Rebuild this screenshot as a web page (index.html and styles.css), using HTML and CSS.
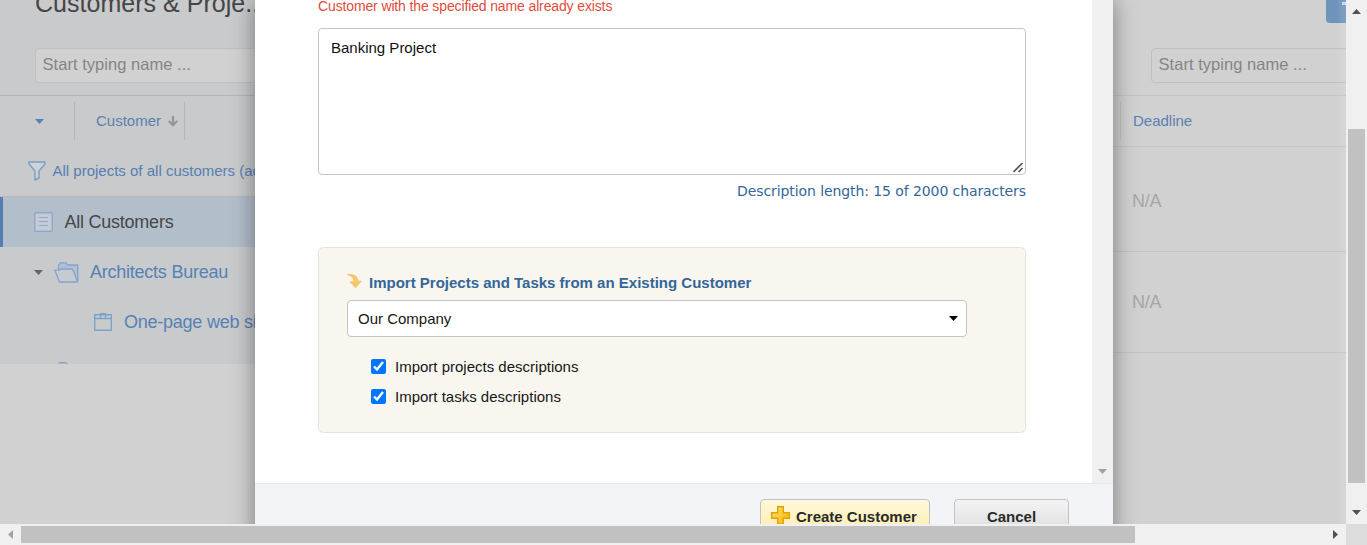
FILE: index.html
```html
<!DOCTYPE html>
<html lang="en">
<head>
<meta charset="utf-8">
<title>Customers &amp; Projects</title>
<link rel="stylesheet" href="styles.css">
</head>
<body>
<div class="window">
  <main class="viewport">
    <aside class="sidebar">
      <div class="sidebar-head">
        <h1 class="title">Customers &amp; Proje...</h1>
        <div class="search">Start typing name ...</div>
      </div>
      <div class="columns">
        <div class="col-menu"><svg width="9" height="5"><path d="M0 0h9L4.5 5z" fill="#5482b5"/></svg></div>
        <div class="col-customer"><span>Customer</span><svg width="10" height="11"><path d="M5 0V9M.8 5L5 9.200L9.200 5" fill="none" stroke="#92979f" stroke-width="2.300"/></svg></div>
      </div>
      <div class="filter-row">
        <svg width="18" height="20" viewBox="0 0 18 20"><path d="M1 1H17V3L11 10V17L7 19V10L1 3Z" fill="#d0d2d4" stroke="#789fc4" stroke-width="1.400" stroke-linejoin="round"/></svg>
        <span>All projects of all customers (active)</span>
      </div>
      <div class="tree-row selected">
        <svg width="19" height="20"><rect x=".75" y=".75" width="17.500" height="18.500" rx="1" fill="#c6cbd1" stroke="#8ba8d0" stroke-width="1.400"/><path d="M5 5.500h9M5 9.500h9M5 13.500h9" stroke="#8ba8d0" stroke-width="1.200"/></svg>
        <span>All Customers</span>
      </div>
      <div class="tree-row customer">
        <svg width="9" height="5"><path d="M0 0h9L4.500 5z" fill="#666"/></svg>
        <svg class="folder" width="25" height="21" viewBox="0 0 25 21"><path d="M4.500 8V3L6.500 .8h5.500L13.500 3H23.800V19.800" fill="#b0bfd3" stroke="#86a3ce" stroke-width="1.300"/><path d="M.8 8.200h4.500L7 7h11l1.700 2.500L23.500 20H5.500z" fill="#c6cbd1" stroke="#86a3ce" stroke-width="1.300" stroke-linejoin="round"/></svg>
        <span>Architects Bureau</span>
      </div>
      <div class="tree-row project">
        <svg width="18" height="18"><path d="M.7 1.700H17.300V17.300H.7ZM.7 5.500H17.300M6.500 5V.7H11.500V5" fill="none" stroke="#7aa4c9" stroke-width="1.400"/></svg>
        <span>One-page web site</span>
      </div>
      <div class="tree-row next"><svg width="10" height="3"><path d="M0 3Q1 .7 3 .7H7Q9 .7 10 3" fill="#b0bfd3" stroke="#86a3ce" stroke-width="1.200"/></svg></div>
    </aside>

    <section class="table">
      <div class="table-head">
        <button class="add"></button>
        <div class="search">Start typing name ...</div>
      </div>
      <div class="columns"><div class="col-deadline">Deadline</div></div>
      <div class="cell first">N/A</div>
      <div class="cell">N/A</div>
      <div class="edge"></div>
    </section>

    <section class="dialog">
      <div class="dialog-main">
        <div class="form">
          <div class="error">Customer with the specified name already exists</div>
          <div class="description">Banking Project<svg class="grip" width="11" height="11"><path d="M.5 10L9.500 1M5.500 10L9.500 6" stroke="#555" stroke-width="1.700"/></svg></div>
          <div class="counter">Description length: 15 of 2000 characters</div>
          <div class="import">
            <div class="import-title">
              <svg width="15" height="15" viewBox="0 0 15 15"><path d="M0 .5C6-.3 11 1.500 11 7H14.500L8.500 13.800L2.800 7.800H6.500C7 4 4.500 2 0 .5Z" fill="#f8c76b" stroke="#f3bd70" stroke-width=".6"/></svg>
              <span>Import Projects and Tasks from an Existing Customer</span>
            </div>
            <div class="select"><span>Our Company</span><svg width="9" height="5"><path d="M0 0h9L4.500 5z"/></svg></div>
            <label class="option"><input type="checkbox" checked><span>Import projects descriptions</span></label>
            <label class="option"><input type="checkbox" checked><span>Import tasks descriptions</span></label>
          </div>
        </div>
        <div class="dialog-scroll"><svg width="9" height="5"><path d="M0 0h9L4.500 5z" fill="#a3a3a3"/></svg></div>
      </div>
      <footer class="actions">
        <div class="btn primary"><svg width="19" height="19"><defs><linearGradient id="gold" x1="0" y1="0" x2="1" y2="1"><stop offset="0" stop-color="#ffe36b"/><stop offset="1" stop-color="#f5b400"/></linearGradient></defs><path d="M6.700.7h5.600v6h6v5.600h-6v6H6.700v-6h-6V6.700h6z" fill="url(#gold)" stroke="#dfa010" stroke-width="1.400"/></svg><span>Create Customer</span></div>
        <div class="btn cancel">Cancel</div>
      </footer>
    </section>
  </main>

  <div class="vscroll">
    <svg width="9" height="5"><path d="M0 5h9L4.500 0z" fill="#505050"/></svg>
    <div class="vthumb"></div>
    <svg width="9" height="5"><path d="M0 0h9L4.500 5z" fill="#505050"/></svg>
  </div>
  <div class="hscroll">
    <svg width="5" height="9"><path d="M5 0v9L0 4.500z" fill="#a3a3a3"/></svg>
    <div class="hthumb"></div>
    <svg width="5" height="9"><path d="M0 0v9L5 4.500z" fill="#505050"/></svg>
  </div>
  <div class="corner"></div>
</div>
</body>
</html>
```
FILE: styles.css
```css
* { box-sizing: border-box; }
body { margin: 0; overflow: hidden; font-family: "Liberation Sans", Arial, sans-serif; }
svg { display: block; flex: none; }

.window { display: grid; grid-template: 524px 21px / 1346px 21px; width: 1367px; height: 545px; }
.viewport { position: relative; display: flex; justify-content: space-between; overflow: hidden; background: #d1d1d1; }

/* Tree on the left */
.sidebar { width: 320px; height: 364px; overflow: hidden; background: #c9cacc; white-space: nowrap; }
.sidebar-head { display: flow-root; height: 96px; border-bottom: 1px solid #b4b6b8; padding-left: 35px; }
.title { margin: -11px 0 0; height: 59px; font-weight: 400; font-size: 25px; line-height: 29px; letter-spacing: .03px; color: #454545; }
.search { height: 35px; border: 1px solid #bfc0c1; border-radius: 4px; padding-left: 6.5px; background: #d1d1d1; color: #858585; font-size: 16.5px; line-height: 31px; letter-spacing: .04px; }
.columns { display: flex; height: 50px; padding-top: 6px; font-size: 15px; line-height: 38px; color: #5a80b1; }
.col-menu { display: flex; align-items: center; width: 75px; height: 38px; padding-left: 35px; border-right: 1px solid #b4b6b8; }
.col-customer { display: flex; align-items: center; gap: 7px; width: 110px; height: 38px; padding-left: 21px; border-right: 1px solid #b4b6b8; }
.filter-row { display: flex; align-items: center; gap: 7px; height: 51px; padding-left: 28px; border-bottom: 1px solid #bbb9b8; font-size: 15px; color: #557fb2; }
.filter-row span { margin: 0 0 2px -.5px; }
.tree-row { display: flex; align-items: center; height: 50px; font-size: 18px; letter-spacing: -.24px; color: #5482b5; }
.selected { gap: 11.500px; padding-left: 31px; border-left: 3px solid #557fb3; background: #b3becb; color: #454749; }
.customer { gap: 11px; padding-left: 34px; }
.project { gap: 12px; padding-left: 94px; }
.next { align-items: flex-start; padding: 15px 0 0 58px; }

/* Deadline column on the right */
.table { position: relative; width: 250px; }
.table-head { display: flex; flex-direction: column; height: 96px; border-bottom: 1px solid #c3c4c5; padding-left: 55px; }
.table-head .search { width: 220px; flex: none; }
.add { position: relative; width: 20px; height: 23px; margin: 0 0 25px; align-self: flex-end; border: 0; border-radius: 0 0 0 4px; background: #6f93bb; }
.add::after { content: ""; position: absolute; right: 0; top: 2px; width: 4px; height: 3px; background: #cdd6e0; }
.table .columns { height: 51px; padding-left: 24px; border-bottom: 1px solid #c5c5c5; }
.col-deadline { height: 38px; padding-left: 12px; border-left: 1px solid #c3c4c5; }
.cell { height: 101px; padding-left: 36px; border-bottom: 1px solid #c4c4c5; font-size: 18px; line-height: 101px; letter-spacing: -.3px; color: #a6a6a9; }
.cell.first { height: 105px; line-height: 108px; }
.edge { position: absolute; inset: 0 0 0 auto; width: 10px; background: linear-gradient(90deg, transparent, rgba(255,255,255,.12)); }

/* Dialog */
.dialog { position: absolute; left: 255px; top: 0; width: 858px; height: 560px; background: #fff; box-shadow: 0 0 22px rgba(0,0,0,.42); }
.dialog-main { display: flex; height: 483px; }
.form { width: 837px; padding: 0 66px 0 63px; }
.error { height: 28px; font-size: 14px; line-height: 13px; letter-spacing: -.13px; color: #e24b3a; }
.description { position: relative; height: 147px; padding: 9px 12px; border: 1px solid #c4c4c4; border-radius: 4px; font-size: 15px; line-height: 20px; color: #111; }
.grip { position: absolute; right: 1px; bottom: 1px; }
.counter { height: 72px; text-align: right; white-space: nowrap; font-family: "DejaVu Sans", Verdana, sans-serif; font-size: 14px; line-height: 33px; letter-spacing: -.09px; color: #336699; }
.import { height: 186px; padding: 26px 28px 0; border: 1px solid #e9e5da; border-radius: 5px; background: #f9f6ef; font-size: 15px; color: #171717; }
.import-title { display: flex; gap: 7px; height: 26px; line-height: 17px; font-weight: 700; color: #336699; }
.select { display: flex; align-items: center; justify-content: space-between; width: 620px; height: 37px; margin-bottom: 14px; padding: 0 8px 0 10px; border: 1px solid #c4c4c6; border-radius: 4px; background: #fff; }
.option { display: flex; align-items: center; gap: 9px; height: 30px; padding-left: 24px; }
.option input { width: 15px; height: 15px; margin: 0; accent-color: #0075ff; }
.dialog-scroll { display: flex; align-items: flex-end; justify-content: center; width: 21px; padding-bottom: 9px; background: #f0f0f0; }
.actions { display: flex; justify-content: flex-end; gap: 24px; height: 77px; padding: 15px 44px 0 0; border-top: 1px solid #e5e7ea; background: #f3f4f7; }
.btn { display: flex; height: 36px; border: 1px solid #c2c2c3; border-radius: 4px; font-size: 15px; font-weight: 700; line-height: 34px; color: #2a2a2a; }
.primary { gap: 6px; width: 170px; padding-left: 10px; background: linear-gradient(#fff9d9, #ffecae); }
.primary svg { margin-top: 6px; }
.cancel { width: 115px; justify-content: center; background: linear-gradient(#f3f3f3, #dcdcdd); }

/* Window scrollbars */
.vscroll { display: flex; flex-direction: column; align-items: center; padding: 9px 0; background: #f0f0f0; }
.vthumb { width: 17px; height: 354px; margin: 115px 0 27px; background: #c1c1c1; }
.hscroll { display: flex; align-items: center; justify-content: space-between; padding: 0 8px; background: #f0f0f0; }
.hthumb { width: 1114px; height: 17px; margin: 0 auto 0 8px; background: #c1c1c1; }
.corner { background: #dcdcdc; }
```
